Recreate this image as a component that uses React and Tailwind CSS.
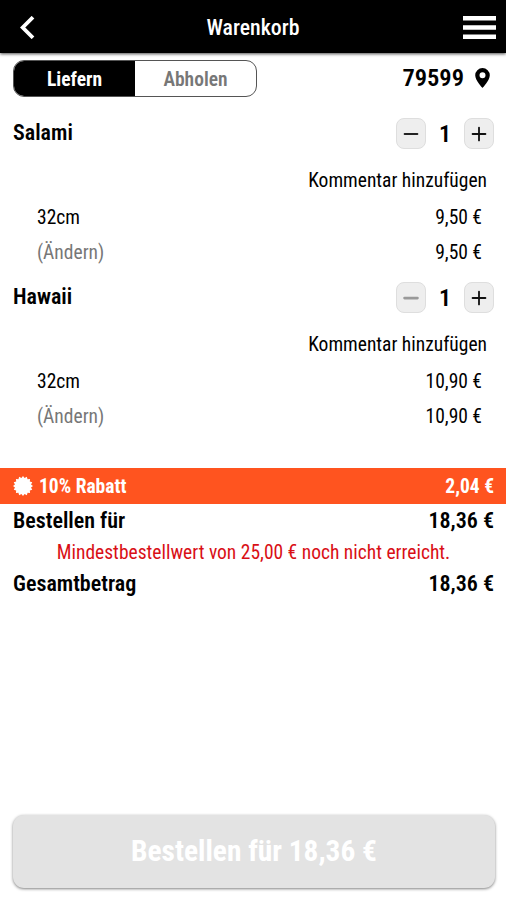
import { Minus, Plus } from 'lucide-react';

const items = [
  { name: 'Salami', count: 1, size: '32cm', price: '9,50 €', minusColor: 'text-[#222222]', minusStroke: 2 },
  { name: 'Hawaii', count: 1, size: '32cm', price: '10,90 €', minusColor: 'text-[#999999]', minusStroke: 3 },
];

function Header() {
  return (
    <header className="z-10 grid h-[53px] shrink-0 grid-cols-[1fr_auto_1fr] items-center bg-black pl-5 pr-[10px] pt-px text-white shadow-[0_1px_3px_rgba(0,0,0,0.7)]">
      <svg className="h-[23px] w-[15px]" viewBox="0 0 15 23" fill="none" stroke="currentColor" strokeWidth="3.8">
        <path d="M13 1.2 2.7 11.5 13 21.8" />
      </svg>
      <h1 className="-ml-[10px] pt-[2px] text-[21.8px] font-medium">Warenkorb</h1>
      <svg className="h-[23px] w-[33px] justify-self-end" viewBox="0 0 33 23" fill="currentColor">
        <path d="M0 0h33v4.6H0zM0 9.2h33v4.6H0zM0 18.4h33V23H0z" />
      </svg>
    </header>
  );
}

function StepButton({ children }) {
  return (
    <button className="flex h-[31px] w-[30px] items-center justify-center rounded-[8px] border border-[#dedede] bg-[#eeeeee]">
      {children}
    </button>
  );
}

function CartItem({ item }) {
  return (
    <section className="h-[164px]">
      <div className="flex h-[47px] items-center justify-between pl-[13px] pr-3">
        <h2 className="pb-px text-[22px] font-semibold">{item.name}</h2>
        <div className="flex items-center">
          <StepButton>
            <Minus className={`size-[22px] shrink-0 ${item.minusColor}`} strokeWidth={item.minusStroke} />
          </StepButton>
          <span className="w-[38px] text-center text-[24px] font-semibold">{item.count}</span>
          <StepButton>
            <Plus className="size-[22px] shrink-0 text-[#111111]" strokeWidth={2} />
          </StepButton>
        </div>
      </div>
      <div className="flex h-[45px] items-center justify-end pr-[19px] pt-[2px]">Kommentar hinzufügen</div>
      <div className="-mt-[3px] flex h-9 items-center justify-between pl-[37px] pr-6 pt-[2px]">
        <span>{item.size}</span>
        <span>{item.price}</span>
      </div>
      <div className="flex h-[35px] items-center justify-between pl-[37px] pr-6 pt-px">
        <span className="text-[#777777]">(Ändern)</span>
        <span>{item.price}</span>
      </div>
    </section>
  );
}

export default function App() {
  return (
    <div className="flex h-[900px] w-[506px] flex-col overflow-hidden bg-white font-['Roboto_Condensed','Roboto',sans-serif] text-[19.5px] leading-none text-black [font-stretch:75%]">
      <Header />

      <div className="flex h-[57px] items-center justify-between pb-1.5 pl-[13px] pr-4">
        <div className="flex h-[37px] w-[244px] overflow-hidden rounded-[11px] border border-[#555555]">
          <button className="w-[121px] bg-black pt-[2px] font-bold text-white">Liefern</button>
          <button className="flex-1 pt-[2px] font-semibold text-[#777777]">Abholen</button>
        </div>
        <div className="flex items-center gap-[11px] text-[24.5px] font-semibold">
          79599
          <svg className="mb-[2px] h-5 w-[15px]" viewBox="0 0 15 20" fill="currentColor">
            <path fillRule="evenodd" d="M7.5 0A7.3 7.3 0 0 0 .2 7.3C.2 12.5 7.5 20 7.5 20s7.3-7.5 7.3-12.700A7.3 7.3 0 0 0 7.5 0Zm0 4.200a3 3 0 1 1 0 6 3 3 0 0 1 0-6Z" />
          </svg>
        </div>
      </div>

      <main>
        {items.map((item) => (
          <CartItem key={item.name} item={item} />
        ))}
      </main>

      <div className="mt-[30px] flex h-9 items-center justify-between bg-[#ff541f] pl-[13px] pr-3 font-bold text-white">
        <span className="flex items-center gap-1.5">
          <svg className="size-5" viewBox="-10 -10 20 20" fill="currentColor">
            <path d="M10 0 8.04 1.6 9.24 3.83 6.82 4.56 7.07 7.07 4.56 6.82 3.83 9.24 1.6 8.04 0 10-1.6 8.04-3.83 9.24-4.56 6.82-7.07 7.07-6.82 4.56-9.24 3.83-8.04 1.6-10 0-8.04-1.6-9.24-3.83-6.82-4.56-7.07-7.07-4.56-6.82-3.83-9.24-1.6-8.04 0-10 1.6-8.04 3.83-9.24 4.56-6.82 7.07-7.07 6.82-4.56 9.24-3.83 8.04-1.6Z" />
          </svg>
          <span className="pt-[2px]">10% Rabatt</span>
        </span>
        <span className="pt-[2px]">2,04 €</span>
      </div>

      <div className="flex h-[34px] items-center justify-between pl-[13px] pr-3 text-[22px] font-semibold">
        <span>Bestellen für</span>
        <span>18,36 €</span>
      </div>
      <p className="flex h-[29px] items-center justify-center pl-px pt-px text-[#d90f16]">
        Mindestbestellwert von 25,00 € noch nicht erreicht.
      </p>
      <div className="flex h-[34px] items-center justify-between pl-[13px] pr-3 text-[22px] font-semibold">
        <span>Gesamtbetrag</span>
        <span>18,36 €</span>
      </div>

      <button className="mb-3 ml-[13px] mr-[11px] mt-auto h-[73px] shrink-0 rounded-[11px] bg-[#e3e3e3] pt-px text-[29.4px] font-bold text-white shadow-[0_1px_3px_rgba(0,0,0,0.5)]">
        Bestellen für 18,36 €
      </button>
    </div>
  );
}
